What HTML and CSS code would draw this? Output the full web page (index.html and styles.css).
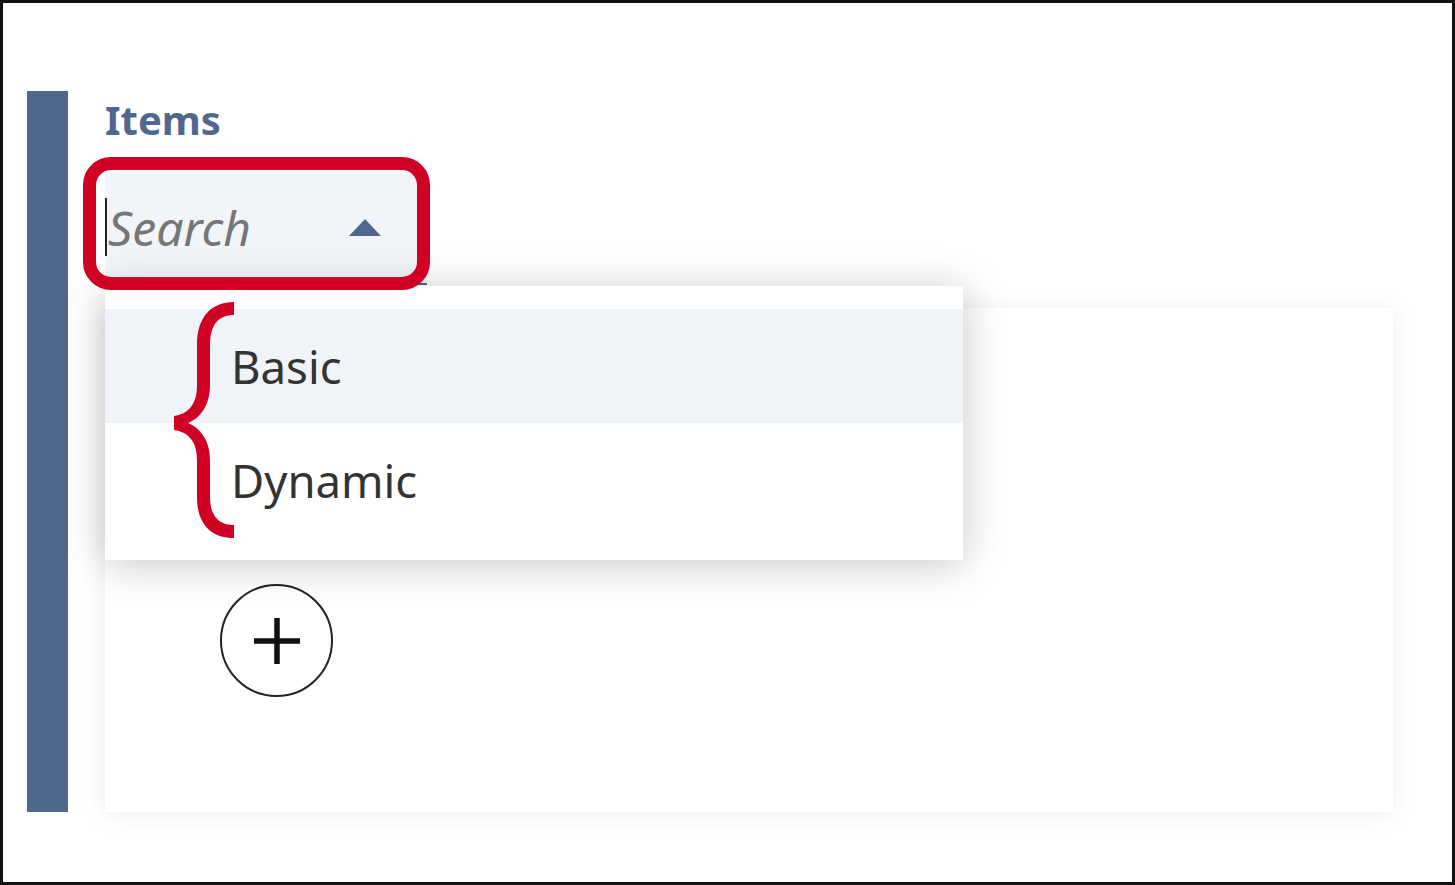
FILE: index.html
```html
<!DOCTYPE html>
<html>
<head>
<meta charset="utf-8">
<link rel="stylesheet" href="styles.css">
</head>
<body>
<div class="frame">
  <div class="bar"></div>
  <div class="content">
    <div class="label">Items</div>
    <div class="field">
      <div class="input">
        <span class="caret"></span>
        <span class="placeholder">Search</span>
        <span class="arrow"></span>
      </div>
      <div class="callout"></div>
      <ul class="menu">
        <li class="opt active">Basic</li>
        <li class="opt">Dynamic</li>
      </ul>
      <svg class="brace" viewBox="165 295 80 250" width="80" height="250">
        <path d="M234,302 C212,302 197,316 197,345 L197,385 C197,405 188,414 174,416 L174,430 C188,432 197,441 197,460 L197,497 C197,525 212,538 234,538 L234,525 C218,525 210,515 210,497 L210,460 C210,440 200,428 188,423 C200,418 210,406 210,385 L210,345 C210,325 218,315 234,315 Z" fill="#cf0022"/>
      </svg>
    </div>
    <div class="card">
      <button class="add" type="button" aria-label="Add">
        <svg viewBox="0 0 46 46" width="46" height="46">
          <path d="M23 0 V46 M0 23 H46" stroke="#111" stroke-width="5.5" fill="none"/>
        </svg>
      </button>
    </div>
  </div>
</div>
</body>
</html>
```

FILE: styles.css
```css
* { box-sizing: border-box; }
html, body { margin: 0; padding: 0; background: #fff; }
body { font-family: "Noto Sans", "Open Sans", sans-serif; }

.frame {
  width: 1455px;
  height: 885px;
  border: 3px solid #111;
  background: #fff;
  display: flex;
  align-items: flex-start;
  padding: 88px 0 0 24px;
  overflow: hidden;
}

.bar {
  width: 41px;
  height: 721px;
  background: #4f6890;
  flex: none;
}

.content {
  margin-left: 37px;
  padding-top: 5px;
  display: flex;
  flex-direction: column;
}

.label {
  font-size: 40px;
  line-height: 48px;
  font-weight: 700;
  color: #4f6890;
}

.field {
  position: relative;
  margin-top: 26px;
  width: 322px;
  height: 115px;
  z-index: 3;
}

.input {
  height: 115px;
  background: #f1f4f8;
  border-bottom: 2px solid #4f6890;
  display: flex;
  align-items: center;
  padding: 0 46px 0 0;
}

.caret {
  width: 2px;
  height: 58px;
  background: #222;
  margin-top: 1px;
}

.placeholder {
  font-size: 48px;
  font-style: italic;
  color: #767676;
  margin-left: 1px;
  line-height: 58px;
  margin-top: 2px;
}

.arrow {
  margin-left: auto;
  width: 0;
  height: 0;
  border-left: 16px solid transparent;
  border-right: 16px solid transparent;
  border-bottom: 17px solid #4f6890;
  margin-top: 2px;
}

.callout {
  position: absolute;
  left: -22px;
  top: -13px;
  width: 347px;
  height: 133px;
  border: 13px solid #cf0022;
  border-radius: 28px;
  z-index: 5;
}

.menu {
  position: absolute;
  left: 0;
  top: 116px;
  width: 858px;
  margin: 0;
  padding: 23px 0;
  list-style: none;
  background: #fff;
  box-shadow: 0 4px 40px rgba(0, 0, 0, 0.22);
  z-index: 4;
}

.opt {
  height: 114px;
  display: flex;
  align-items: center;
  padding-left: 126px;
  font-size: 45.5px;
  color: #333;
}

.opt.active { background: #f0f4f9; }

.brace {
  position: absolute;
  left: 60px;
  top: 125px;
  z-index: 6;
}

.card {
  margin-top: 23px;
  width: 1288px;
  height: 504px;
  background: #fff;
  box-shadow: 0 2px 24px rgba(0, 0, 0, 0.08);
  padding: 276px 0 0 115px;
  position: relative;
  z-index: 1;
}

.add {
  width: 113px;
  height: 113px;
  border-radius: 50%;
  border: 2px solid #222;
  background: #fff;
  padding: 0;
  display: flex;
  align-items: center;
  justify-content: center;
  cursor: pointer;
}

.add svg { display: block; }
```
